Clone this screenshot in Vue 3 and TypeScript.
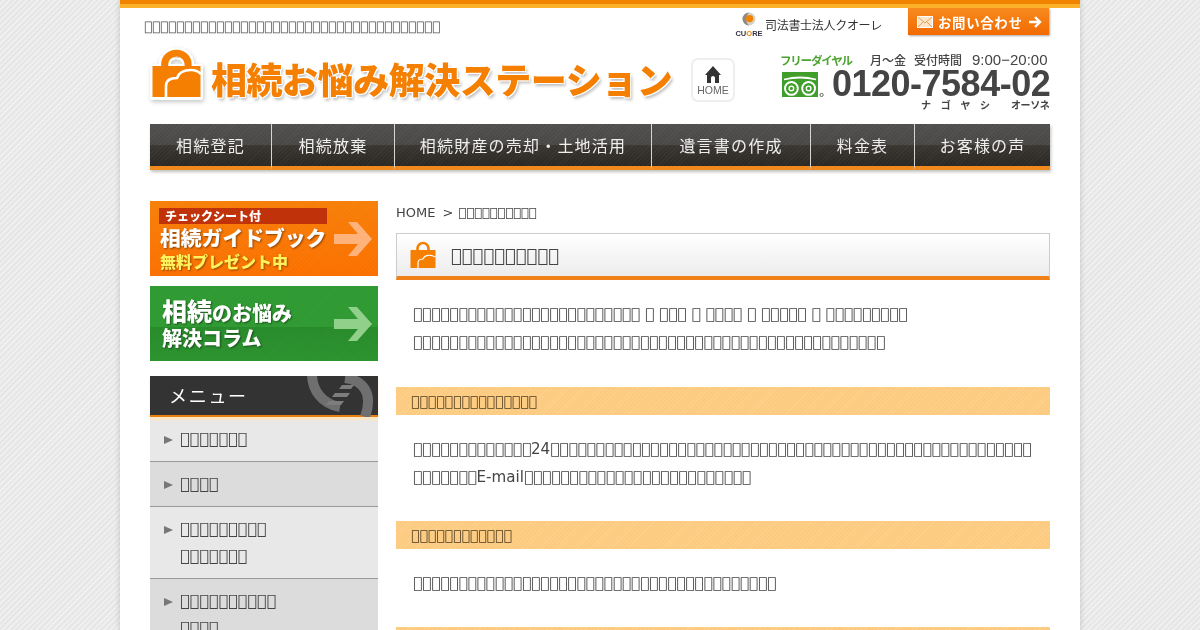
<script setup lang="ts">
const box = (n: number) => '\uE000'.repeat(n)

const navItems = [
  { label: '相続登記', width: 122 },
  { label: '相続放棄', width: 123 },
  { label: '相続財産の売却・土地活用', width: 257 },
  { label: '遺言書の作成', width: 159 },
  { label: '料金表', width: 104 },
  { label: 'お客様の声', width: 135 },
]

const menuItems = [
  { lines: [box(7)] },
  { lines: [box(4)] },
  { lines: [box(9), box(7)] },
  { lines: [box(10), box(4)] },
]

const leadFirst = [25, 1, 3, 1, 4, 1, 5, 1, 9].map(box).join(' ')

const sections = [
  {
    title: box(15),
    lines: [box(13) + '24' + box(53), box(7) + 'E-mail' + box(25)],
  },
  { title: box(12), lines: [box(40)] },
  { title: '', lines: [] },
]
</script>

<template>
  <div class="page">
    <div class="wrap">
      <header class="header">
        <div class="head-left">
          <p class="tagline">{{ box(37) }}</p>
          <div class="logo-row">
            <a class="logo">
              <svg class="logo-bag" viewBox="0 0 56 56" width="56" height="56">
                <path d="M15.7 20 V16 A11.7 10.7 0 0 1 39.1 16 V20" fill="none" stroke="#fff" stroke-width="12" />
                <rect x="1" y="16" width="53" height="36" rx="2" fill="#fff" />
                <path d="M15.7 20 V16 A11.7 10.7 0 0 1 39.1 16 V20" fill="none" stroke="#f57f00" stroke-width="7" />
                <path d="M23 10 Q27.5 7 32 10 Z" fill="#d6d6d6" />
                <rect x="3.5" y="18" width="48" height="31" fill="#f57f00" />
                <path d="M17 49 V38 C17 32 22 30 28 30 C30 24 36 22 42 22 C46 22 50 24 52 26" fill="none" stroke="#fff" stroke-width="2.6" />
              </svg>
              <span class="logo-text">相続お悩み解決ステーション</span>
            </a>
            <a class="home-btn">
              <svg viewBox="0 0 16 18" width="16" height="18">
                <path d="M8 0 L16 9 H14 V17 H10 V12 A2 2 0 0 0 6 12 V17 H2 V9 H0 Z" fill="#333" />
              </svg>
              <span>HOME</span>
            </a>
          </div>
        </div>
        <div class="head-right">
          <div class="head-top">
            <div class="cuore">
              <div class="cuore-mark">
                <svg viewBox="0 0 14 14" width="14" height="14">
                  <circle cx="7" cy="7" r="6.5" fill="#d9cfc2" />
                  <path d="M7 .5 A6.5 6.5 0 0 0 7 13.5 A9 9 0 0 1 7 .5 Z" fill="#8f8a84" />
                  <circle cx="7.6" cy="6.6" r="3.6" fill="#f08300" />
                </svg>
                <span class="cuore-name">CU<i>O</i>RE</span>
              </div>
              <span class="cuore-text">司法書士法人クオーレ</span>
            </div>
            <a class="contact-btn">
              <svg viewBox="0 0 16 12" width="16" height="12">
                <rect x="0.5" y="0.5" width="15" height="11" fill="#fde6c8" stroke="#fff" />
                <path d="M1 1 L8 7 L15 1 M1 11 L6 6 M15 11 L10 6" fill="none" stroke="#e8a060" stroke-width="1" />
              </svg>
              <span>お問い合わせ</span>
              <svg viewBox="0 0 14 12" width="14" height="12">
                <path d="M1 6 H12 M7 1 L12 6 L7 11" fill="none" stroke="#fff" stroke-width="2.4" />
              </svg>
            </a>
          </div>
          <div class="tel">
            <div class="tel-hours">
              <span class="free">フリーダイヤル</span>
              <span class="days">月〜金</span>
              <span class="hours">受付時間</span>
              <span class="time">9:00−20:00</span>
            </div>
            <div class="tel-main">
              <svg class="free-mark" viewBox="0 0 42 25" width="42" height="25">
                <rect x="0" y="0" width="36" height="25" fill="#3f9f2a" />
                <circle cx="9.4" cy="16.4" r="6.4" fill="none" stroke="#fff" stroke-width="2" />
                <circle cx="26.6" cy="16.4" r="6.4" fill="none" stroke="#fff" stroke-width="2" />
                <circle cx="9.4" cy="16.4" r="2.3" fill="none" stroke="#fff" stroke-width="1.4" />
                <circle cx="26.6" cy="16.4" r="2.3" fill="none" stroke="#fff" stroke-width="1.4" />
                <path d="M2 7.5 Q18 3.5 34 7.5" fill="none" stroke="#fff" stroke-width="1.8" />
                <circle cx="39.6" cy="23" r="1.6" fill="none" stroke="#555" stroke-width="0.9" />
              </svg>
              <span class="tel-num">0120-7584-02</span>
            </div>
            <div class="tel-kana">
              <span class="kana-wide">ナゴヤシ</span>
              <span class="kana-tight">オーソネ</span>
            </div>
          </div>
        </div>
      </header>

      <nav class="nav">
        <a v-for="item in navItems" :key="item.label" class="nav-item" :style="{ width: item.width + 'px' }">
          {{ item.label }}
        </a>
      </nav>

      <div class="columns">
        <aside class="side">
          <a class="banner banner-guide">
            <span class="guide-tag">チェックシート付</span>
            <span class="guide-title">相続ガイドブック</span>
            <span class="guide-sub">無料プレゼント中</span>
            <svg class="banner-arrow" viewBox="0 0 38 34" width="38" height="34">
              <path d="M0 12 H24 L14 0 H23 L38 17 L23 34 H14 L24 22 H0 Z" fill="#ffb27a" />
            </svg>
          </a>
          <a class="banner banner-column">
            <span class="col-line"><b>相続</b>のお悩み</span>
            <span class="col-line col-second">解決コラム</span>
            <svg class="banner-arrow" viewBox="0 0 38 34" width="38" height="34">
              <path d="M0 12 H24 L14 0 H23 L38 17 L23 34 H14 L24 22 H0 Z" fill="#90d08a" />
            </svg>
          </a>
          <div class="menu">
            <div class="menu-head">
              <svg class="menu-deco" viewBox="0 0 228 41" width="228" height="41">
                <path d="M162 -2 C162 14 172 28 190 31" fill="none" stroke="#6f6f6f" stroke-width="10" />
                <path d="M195 2 C212 4 224 16 215 41" fill="none" stroke="#6f6f6f" stroke-width="10" />
                <path d="M192 9 H204 L201 13 H189 Z M185 17 H200 L197 21 H182 Z M179 25 H194 L191 29 H176 Z" fill="#7d7d7d" />
              </svg>
              <span class="menu-title">メニュー</span>
            </div>
            <ul class="menu-list">
              <li v-for="(item, i) in menuItems" :key="i" class="menu-item">
                <span class="menu-tri"></span>
                <span class="menu-label">
                  <span v-for="(line, j) in item.lines" :key="j" class="menu-line">{{ line }}</span>
                </span>
              </li>
            </ul>
          </div>
        </aside>

        <main class="content">
          <div class="crumbs"><span>HOME</span><span class="crumb-sep">&gt;</span><span>{{ box(10) }}</span></div>
          <h1 class="page-title">
            <svg viewBox="0 0 26 28" width="26" height="28">
              <path d="M7.5 11 V7.5 A5.5 5.5 0 0 1 18.5 7.5 V11" fill="none" stroke="#f57f00" stroke-width="2.6" />
              <rect x="0.5" y="9" width="25" height="18" fill="#f57f00" />
              <path d="M8 27 V22 C8 19 11 18 13 18 C14.5 14 20 13 25.5 16" fill="none" stroke="#fff" stroke-width="1.2" />
            </svg>
            <span>{{ box(10) }}</span>
          </h1>
          <div class="lead">
            <p>{{ leadFirst }}</p>
            <p>{{ box(52) }}</p>
          </div>
          <section v-for="(s, i) in sections" :key="i" class="sec">
            <h2 class="sec-title">{{ s.title }}</h2>
            <div v-if="s.lines.length" class="sec-body">
              <p v-for="(line, j) in s.lines" :key="j">{{ line }}</p>
            </div>
          </section>
        </main>
      </div>
    </div>
  </div>
</template>

<style>
html, body {
  margin: 0;
  height: 630px;
  overflow: hidden;
  background: repeating-linear-gradient(135deg, #e6e6e6 0 2px, #efefef 2px 4px);
}
</style>

<style scoped>
.page {
  width: 1200px;
  height: 630px;
  overflow: hidden;
  font-family: "DejaVu Sans", sans-serif;
  color: #333;
  will-change: opacity;
}
.wrap {
  width: 960px;
  height: 630px;
  margin: 0 auto;
  box-sizing: border-box;
  padding: 0 30px;
  background: #fff;
  border-top: 4px solid #f08300;
  box-shadow: 0 0 6px rgba(0, 0, 0, 0.18);
  position: relative;
}
.wrap::before {
  content: "";
  position: absolute;
  left: 0;
  right: 0;
  top: 0;
  height: 4px;
  background: #fcb12b;
}
.header {
  display: flex;
  justify-content: space-between;
  height: 120px;
}
.head-left {
  display: flex;
  flex-direction: column;
}
.tagline {
  margin: 15px 0 0 -6px;
  font-size: 13.33px;
  line-height: 16px;
  color: #555;
}
.logo-row {
  display: flex;
  align-items: flex-start;
  margin: 13px 0 0 -1px;
}
.logo {
  display: flex;
  width: 542px;
}
.logo-bag {
  flex: none;
  filter: drop-shadow(1px 2px 2px rgba(0, 0, 0, 0.22));
}
.logo-text {
  margin: 2px 0 0 6px;
  font-family: "Noto Sans CJK JP", sans-serif;
  font-weight: 900;
  font-size: 36px;
  letter-spacing: -0.46px;
  line-height: 56px;
  white-space: nowrap;
  color: #f57f00;
  text-shadow: 1px 1px 0 #fff, -1px -1px 0 #fff, 1px -1px 0 #fff, -1px 1px 0 #fff, 2px 3px 3px rgba(0, 0, 0, 0.25);
}
.home-btn {
  width: 44px;
  height: 44px;
  margin-top: 10px;
  box-sizing: border-box;
  border: 2px solid #eee;
  border-radius: 7px;
  display: flex;
  flex-direction: column;
  align-items: center;
  padding-top: 6px;
  font-family: "Liberation Sans", sans-serif;
  font-size: 10.5px;
  line-height: 13px;
  color: #666;
}
.head-right {
  width: 314px;
}
.head-top {
  display: flex;
  height: 42px;
}
.cuore {
  display: flex;
  width: 172px;
  gap: 3px;
}
.cuore-mark {
  width: 26px;
  padding-top: 8px;
  display: flex;
  flex-direction: column;
  align-items: center;
}
.cuore-name {
  margin-top: 3px;
  font-family: "Liberation Sans", sans-serif;
  font-size: 7.5px;
  font-weight: 700;
  line-height: 10px;
  color: #334;
}
.cuore-name i {
  font-style: normal;
  color: #f08300;
}
.cuore-text {
  font-family: "Noto Sans CJK JP", sans-serif;
  font-size: 12px;
  letter-spacing: -0.3px;
  line-height: 42px;
  color: #333;
}
.contact-btn {
  width: 141px;
  height: 27px;
  margin-top: 4px;
  box-sizing: border-box;
  padding: 0 7px 0 9px;
  display: flex;
  align-items: center;
  gap: 5px;
  background: linear-gradient(#f78a1e, #f26a00);
  box-shadow: 1px 1px 2px rgba(0, 0, 0, 0.35);
  font-family: "Noto Sans CJK JP", sans-serif;
  font-size: 13.4px;
  font-weight: 700;
  letter-spacing: 0.7px;
  color: #fff;
}
.tel {
  margin: 6px 0 0 44px;
  width: 270px;
}
.tel-hours {
  display: flex;
  font-family: "Noto Sans CJK JP", sans-serif;
  font-size: 12px;
  font-weight: 500;
  line-height: 16px;
  color: #444;
  white-space: nowrap;
}
.free {
  width: 90px;
  font-size: 11.5px;
  color: #4da32f;
  font-weight: 700;
  letter-spacing: -1.2px;
}
.days {
  width: 44px;
}
.hours {
  width: 58px;
}
.time {
  font-family: "Liberation Sans", sans-serif;
  font-size: 15px;
}
.tel-main {
  display: flex;
  align-items: center;
  height: 32px;
}
.free-mark {
  margin-left: 2px;
  flex: none;
}
.tel-num {
  margin-left: 8px;
  font-family: "Liberation Sans", sans-serif;
  font-size: 36px;
  font-weight: 700;
  letter-spacing: -0.5px;
  line-height: 32px;
  color: #444;
  white-space: nowrap;
}
.tel-kana {
  display: flex;
  margin: -1px 0 0 141px;
  font-family: "Noto Sans CJK JP", sans-serif;
  font-size: 10px;
  font-weight: 700;
  line-height: 12px;
  color: #444;
  white-space: nowrap;
}
.kana-wide {
  width: 90px;
  letter-spacing: 9.7px;
}
.kana-tight {
  letter-spacing: -0.4px;
}
.nav {
  display: flex;
  height: 46px;
  box-shadow: 1px 2px 3px rgba(0, 0, 0, 0.25);
}
.nav-item {
  box-sizing: border-box;
  height: 46px;
  display: flex;
  align-items: center;
  justify-content: center;
  border-right: 1px solid #d5d5d5;
  border-bottom: 4px solid #f08a1d;
  background:
    repeating-linear-gradient(135deg, rgba(255, 255, 255, 0.035) 0 1px, transparent 1px 3px),
    linear-gradient(#514f4d 0, #4a4846 49%, #393531 51%, #2b2723 100%);
  font-family: "Noto Sans CJK JP", sans-serif;
  font-size: 16px;
  letter-spacing: 1.2px;
  color: #eee;
}
.nav-item:last-child {
  border-right: 0;
}
.columns {
  display: flex;
  gap: 18px;
  margin-top: 31px;
}
.side {
  width: 228px;
  flex: none;
}
.banner {
  position: relative;
  display: block;
  height: 75px;
  margin-bottom: 10px;
  font-family: "Noto Sans CJK JP", sans-serif;
  font-weight: 900;
  color: #fff;
  white-space: nowrap;
  overflow: hidden;
}
.banner-guide {
  background:
    repeating-linear-gradient(135deg, rgba(255, 255, 255, 0.03) 0 1px, transparent 1px 3px),
    linear-gradient(#f77f08, #fb7000);
}
.banner-column {
  background:
    repeating-linear-gradient(135deg, rgba(255, 255, 255, 0.025) 0 1px, transparent 1px 3px),
    #2f9a32;
}
.banner-arrow {
  position: absolute;
  right: 6px;
  top: 21px;
}
.guide-tag {
  display: block;
  width: 168px;
  height: 16px;
  margin: 7px 0 0 9px;
  padding-left: 6px;
  box-sizing: border-box;
  background: #c0330a;
  font-size: 12px;
  line-height: 16px;
}
.guide-title {
  display: block;
  margin: 0 0 0 10px;
  font-size: 20.8px;
  line-height: 27px;
  text-shadow: 1px 1px 2px rgba(0, 0, 0, 0.45);
}
.guide-sub {
  display: block;
  margin: 1px 0 0 10px;
  font-size: 16px;
  line-height: 18px;
  color: #fff25a;
  text-shadow: 1px 1px 2px rgba(0, 0, 0, 0.4);
}
.col-line {
  display: block;
  height: 34px;
  margin: 7px 0 0 12px;
  font-size: 20px;
  line-height: 34px;
  text-shadow: 1px 1px 2px rgba(0, 0, 0, 0.45);
}
.col-line b {
  font-size: 25px;
  font-weight: 900;
}
.col-second {
  margin: 0;
  padding-left: 12px;
  line-height: 21px;
  background: linear-gradient(rgba(0, 60, 0, 0.16), rgba(0, 60, 0, 0.08));
}
.menu {
  margin-top: 15px;
}
.menu-head {
  position: relative;
  z-index: 1;
  height: 39px;
  background: #333;
  border-bottom: 2px solid #e87f10;
  box-shadow: 0 3px 2px #fde6c4;
  font-family: "Noto Sans CJK JP", sans-serif;
  font-size: 18px;
  line-height: 39px;
  letter-spacing: 1.7px;
  color: #fff;
}
.menu-title {
  position: relative;
  margin-left: 19px;
}
.menu-deco {
  position: absolute;
  left: 0;
  top: 0;
}
.menu-list {
  list-style: none;
  margin: 0;
  padding: 0;
}
.menu-item {
  display: flex;
  padding: 8px 0 9px 14px;
  border-bottom: 1px solid #999;
  background: #e8e8e8;
  font-size: 16px;
  line-height: 27px;
  color: #444;
}
.menu-item:nth-child(even) {
  background: #dcdcdc;
}
.menu-tri {
  width: 0;
  height: 0;
  margin: 11px 7px 0 0;
  border-style: solid;
  border-width: 4.5px 0 4.5px 9px;
  border-color: transparent transparent transparent #777;
}
.menu-line {
  display: block;
}
.content {
  width: 654px;
  flex: none;
}
.crumbs {
  display: flex;
  margin-top: 3px;
  font-size: 13px;
  line-height: 18px;
  color: #444;
}
.crumb-sep {
  margin: 0 5px 0 7px;
}
.page-title {
  display: flex;
  align-items: center;
  gap: 15px;
  box-sizing: border-box;
  height: 47px;
  margin: 11px 0 0;
  padding: 0 0 0 13px;
  border: 1px solid #ccc;
  border-bottom: 4px solid #f08018;
  background: linear-gradient(#fff, #ececec);
  font-size: 18px;
  font-weight: 400;
  color: #444;
}
.lead {
  margin: 20px 0 31px;
}
.lead p,
.sec-body p {
  margin: 0;
  padding-left: 17px;
  font-size: 15.13px;
  line-height: 28px;
  word-spacing: 0.25px;
  color: #444;
  white-space: nowrap;
}
.sec {
  margin-top: 30px;
}
.lead + .sec {
  margin-top: 0;
}
.sec-title {
  height: 28px;
  margin: 0;
  padding-left: 15px;
  background:
    repeating-linear-gradient(135deg, rgba(255, 255, 255, 0.1) 0 1px, transparent 1px 3px),
    #fdcb80;
  font-size: 14px;
  font-weight: 400;
  line-height: 29px;
  color: #4d3b1e;
}
.sec-body {
  margin-top: 20px;
}
</style>
